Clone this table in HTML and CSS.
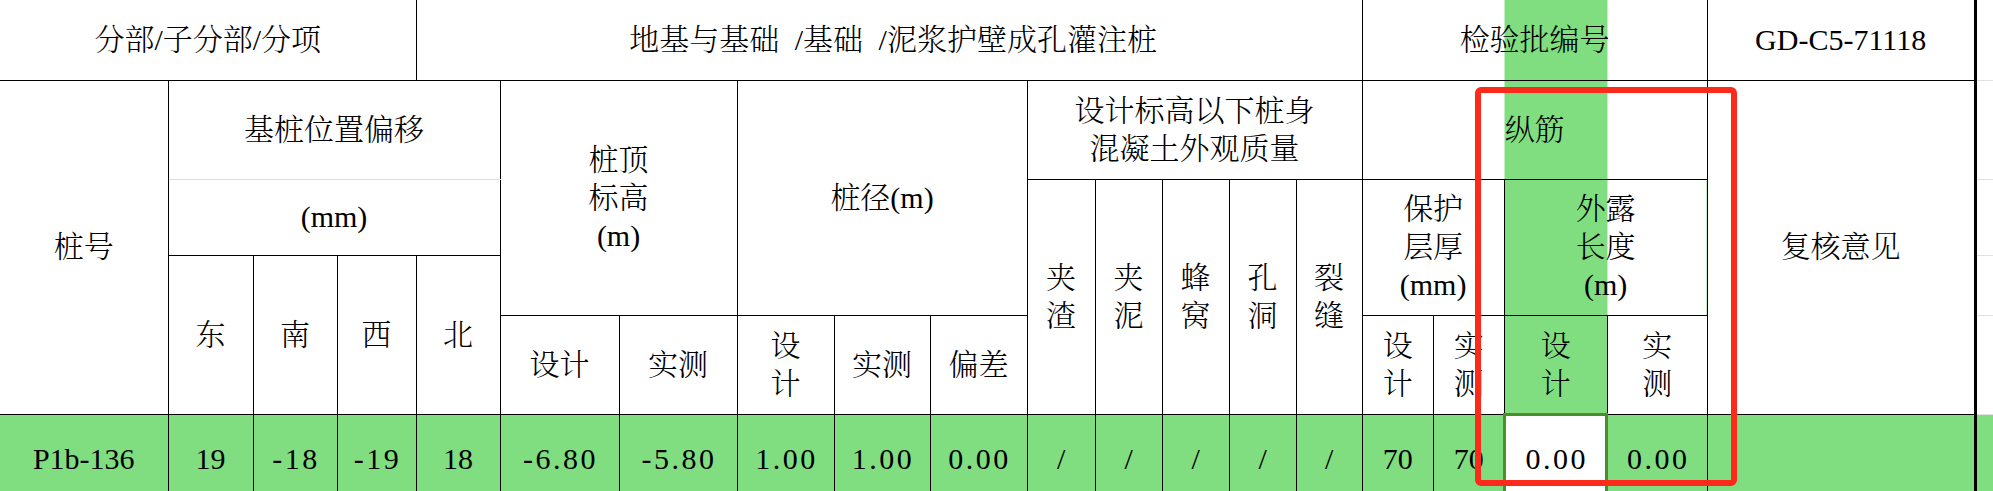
FILE: index.html
```html
<!DOCTYPE html>
<html lang="zh-CN">
<head>
<meta charset="utf-8">
<title>检验批</title>
<link rel="stylesheet" href="styles.css">
</head>
<body>
<div class="sheet">
  <table class="grid">
    <colgroup>
      <col class="w168"><col class="w85"><col class="w84"><col class="w79"><col class="w84">
      <col class="w119"><col class="w118"><col class="w97"><col class="w96"><col class="w97">
      <col class="w68"><col class="w67"><col class="w67"><col class="w67"><col class="w66">
      <col class="w71"><col class="w71"><col class="w103"><col class="w100"><col class="w268"><col class="w18">
    </colgroup>
    <tr class="ra">
      <td colspan="4" class="edge">分部/子分部/分项</td>
      <td colspan="11" class="wide-sp">地基与基础 /基础 /泥浆护壁成孔灌注桩</td>
      <td colspan="4" class="band-wide">检验批编号</td>
      <td class="last">GD-C5-71118</td>
      <td class="gutter"></td>
    </tr>
    <tr class="rb">
      <td rowspan="4" class="edge">桩号</td>
      <td colspan="4" class="soft-bottom">基桩位置偏移</td>
      <td colspan="2" rowspan="3">桩顶<br>标高<br>(m)</td>
      <td colspan="3" rowspan="3">桩径(m)</td>
      <td colspan="5">设计标高以下桩身<br>混凝土外观质量</td>
      <td colspan="4" class="band-wide">纵筋</td>
      <td rowspan="4" class="last">复核意见</td>
      <td class="gutter"></td>
    </tr>
    <tr class="rc">
      <td colspan="4" class="soft-top">(mm)</td>
      <td rowspan="3" class="stack">夹<br>渣</td>
      <td rowspan="3" class="stack">夹<br>泥</td>
      <td rowspan="3" class="stack">蜂<br>窝</td>
      <td rowspan="3" class="stack">孔<br>洞</td>
      <td rowspan="3" class="stack">裂<br>缝</td>
      <td colspan="2" rowspan="2">保护<br>层厚<br>(mm)</td>
      <td colspan="2" rowspan="2" class="band-half">外露<br>长度<br>(m)</td>
      <td class="gutter"></td>
    </tr>
    <tr class="rd">
      <td rowspan="2">东</td>
      <td rowspan="2">南</td>
      <td rowspan="2">西</td>
      <td rowspan="2">北</td>
      <td class="gutter"></td>
    </tr>
    <tr class="re">
      <td>设计</td>
      <td>实测</td>
      <td>设<br>计</td>
      <td>实测</td>
      <td>偏差</td>
      <td>设<br>计</td>
      <td>实<br>测</td>
      <td class="band">设<br>计</td>
      <td>实<br>测</td>
      <td class="gutter"></td>
    </tr>
    <tr class="rf">
      <td class="edge">P1b-136</td>
      <td>19</td>
      <td class="num">-18</td>
      <td class="num">-19</td>
      <td>18</td>
      <td class="num">-6.80</td>
      <td class="num">-5.80</td>
      <td class="num">1.00</td>
      <td class="num">1.00</td>
      <td class="num">0.00</td>
      <td>/</td>
      <td>/</td>
      <td>/</td>
      <td>/</td>
      <td>/</td>
      <td>70</td>
      <td>70</td>
      <td class="num active">0.00</td>
      <td class="num">0.00</td>
      <td class="last"></td>
      <td class="gutter"></td>
    </tr>
  </table>
  <div class="mark"></div>
</div>
</body>
</html>
```
FILE: styles.css
```css
html, body {
  margin: 0;
  padding: 0;
  background: #ffffff;
}

body {
  width: 1993px;
  height: 491px;
  overflow: hidden;
}

.sheet {
  position: relative;
  width: 1993px;
}

.grid {
  border-collapse: collapse;
  table-layout: fixed;
  width: 1993px;
  font-family: "Liberation Serif", "Noto Serif CJK SC", "Noto Sans CJK SC", serif;
  font-size: 30px;
  font-weight: 300;
  line-height: 38px;
  color: #000000;
}

.w168 { width: 168px; }
.w85 { width: 85px; }
.w84 { width: 84px; }
.w79 { width: 79px; }
.w119 { width: 119px; }
.w118 { width: 118px; }
.w97 { width: 97px; }
.w96 { width: 96px; }
.w68 { width: 68px; }
.w67 { width: 67px; }
.w66 { width: 66px; }
.w71 { width: 71px; }
.w103 { width: 103px; }
.w100 { width: 100px; }
.w268 { width: 268px; }
.w18 { width: 18px; }

.ra { height: 80px; }
.rb { height: 99px; }
.rc { height: 76px; }
.rd { height: 60px; }
.re { height: 99px; }
.rf { height: 90px; }

.grid td {
  border: 1px solid #000000;
  padding: 0;
  text-align: center;
  vertical-align: middle;
  white-space: nowrap;
  overflow: hidden;
}

.ra td {
  border-top: none;
}

.grid td.edge {
  border-left: none;
}

.grid td.last {
  border-right: 3px solid #000000;
}

.grid td.soft-bottom {
  border-bottom: 1px solid #dcdcdc;
}

.grid td.soft-top {
  border-top: 1px solid #dcdcdc;
}

.grid td.gutter {
  border-right: none;
  border-bottom: 1px solid #e0e0e0;
}

.grid td.wide-sp {
  word-spacing: 8px;
  padding-left: 8px;
}

.rf td {
  background: #80de80;
}

.rf td.gutter {
  border-bottom: none;
}

.grid td.num {
  letter-spacing: 2.5px;
  padding-left: 2px;
}

.stack {
  padding-bottom: 8px;
}

.band {
  background: #80de80;
}

.band-wide {
  background: linear-gradient(90deg, transparent 142px, #80de80 142px, #80de80 245px, transparent 245px);
}

.band-half {
  background: linear-gradient(90deg, #80de80 0, #80de80 103px, transparent 103px);
}

.rf td.active {
  background: #ffffff;
  outline: 3px solid #4b8f29;
  outline-offset: -2px;
}

.mark {
  position: absolute;
  left: 1475px;
  top: 87px;
  width: 262px;
  height: 399px;
  box-sizing: border-box;
  border: 6px solid #fc2a1b;
  border-radius: 6px;
  pointer-events: none;
}
```
